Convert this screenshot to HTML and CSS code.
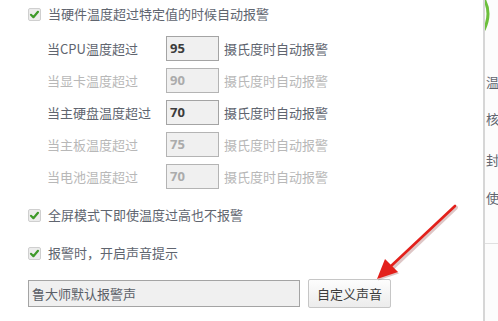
FILE: index.html
```html
<!DOCTYPE html>
<html lang="zh-CN">
<head>
<meta charset="utf-8">
<title>温度报警设置</title>
<link rel="stylesheet" href="styles.css">
</head>
<body>
<div class="window">
  <div class="main">
    <div class="check-row first">
      <span class="cb"><svg viewBox="0 0 13 13" width="13" height="13"><path d="M3 6.8 L5.4 9.2 L10 3.8" fill="none" stroke="#3f9a2a" stroke-width="2.2" stroke-linecap="round" stroke-linejoin="round"/></svg></span>
      <span class="ctext">当硬件温度超过特定值的时候自动报警</span>
    </div>
    <div class="temps">
      <div class="trow">
        <span class="tlabel">当CPU温度超过</span><span class="tbox">95</span><span class="unit">摄氏度时自动报警</span>
      </div>
      <div class="trow off">
        <span class="tlabel">当显卡温度超过</span><span class="tbox">90</span><span class="unit">摄氏度时自动报警</span>
      </div>
      <div class="trow">
        <span class="tlabel">当主硬盘温度超过</span><span class="tbox">70</span><span class="unit">摄氏度时自动报警</span>
      </div>
      <div class="trow off">
        <span class="tlabel">当主板温度超过</span><span class="tbox">75</span><span class="unit">摄氏度时自动报警</span>
      </div>
      <div class="trow off">
        <span class="tlabel">当电池温度超过</span><span class="tbox">70</span><span class="unit">摄氏度时自动报警</span>
      </div>
    </div>
    <div class="check-row fullscreen">
      <span class="cb"><svg viewBox="0 0 13 13" width="13" height="13"><path d="M3 6.8 L5.4 9.2 L10 3.8" fill="none" stroke="#3f9a2a" stroke-width="2.2" stroke-linecap="round" stroke-linejoin="round"/></svg></span>
      <span class="ctext">全屏模式下即使温度过高也不报警</span>
    </div>
    <div class="check-row sound">
      <span class="cb"><svg viewBox="0 0 13 13" width="13" height="13"><path d="M3 6.8 L5.4 9.2 L10 3.8" fill="none" stroke="#3f9a2a" stroke-width="2.2" stroke-linecap="round" stroke-linejoin="round"/></svg></span>
      <span class="ctext">报警时，开启声音提示</span>
    </div>
    <div class="sound-row">
      <div class="field">鲁大师默认报警声</div>
      <div class="btn">自定义声音</div>
    </div>
  </div>
  <div class="side">
    <svg class="arc" viewBox="0 0 12 32" width="12" height="32"><path d="M1 0 Q9 14 1 31" fill="none" stroke="#6cbf3c" stroke-width="3"/></svg>
    <span class="sch s1">温</span>
    <span class="sch s2">核</span>
    <span class="sch s3">封</span>
    <span class="sch s4">使</span>
    <div class="hline"></div>
  </div>
  <svg class="arrow" viewBox="0 0 498 321" width="498" height="321">
    <line x1="455" y1="206" x2="392" y2="266" stroke="#7a1a1a" stroke-opacity="0.25" stroke-width="4" stroke-linecap="round" transform="translate(1,1.5)"/>
    <line x1="455" y1="206" x2="390" y2="267" stroke="#e3201b" stroke-width="2.6" stroke-linecap="round"/>
    <polygon points="377,279 385,259 398,272" fill="#7a1a1a" fill-opacity="0.25" transform="translate(1,1.5)"/>
    <polygon points="377,279 385,259 398,272" fill="#e3201b"/>
  </svg>
</div>
</body>
</html>
```
FILE: styles.css
```css
* { box-sizing: border-box; }
html, body { margin: 0; padding: 0; }
body {
  width: 498px;
  height: 321px;
  overflow: hidden;
  background: #ffffff;
  font-family: "Noto Sans CJK SC", "Noto Sans", sans-serif;
  font-size: 13px;
  color: #60656f;
}
.window {
  position: relative;
  display: flex;
  width: 498px;
  height: 321px;
}
.main {
  width: 483px;
  flex: none;
  display: flex;
  flex-direction: column;
  padding-left: 28px;
  background: #ffffff;
}
.check-row {
  display: flex;
  align-items: center;
  height: 20px;
}
.check-row.first { margin-top: 4px; }
.check-row.fullscreen { margin-top: 16px; }
.check-row.sound { margin-top: 18px; }
.cb {
  width: 13px;
  height: 13px;
  flex: none;
  display: flex;
  border: 1px solid #cfcfcf;
  border-radius: 2px;
  background: #ececec;
  margin-right: 7px;
}
.cb svg { display: block; margin: -1px; }
.ctext { line-height: 20px; white-space: nowrap; }
.temps {
  display: flex;
  flex-direction: column;
  gap: 7px;
  margin-top: 12px;
  margin-left: 19px;
}
.trow {
  display: flex;
  align-items: center;
  height: 25px;
}
.tlabel { width: 119px; flex: none; white-space: nowrap; }
.tbox {
  width: 53px;
  height: 25px;
  flex: none;
  border: 1px solid #a4a4a4;
  background: #f0f0f0;
  font-family: "Open Sans", "Liberation Sans", sans-serif;
  font-weight: 700;
  font-size: 13px;
  color: #3c3c3c;
  line-height: 23px;
  padding-left: 3px;
}
.unit { margin-left: 5px; white-space: nowrap; }
.trow.off { color: #b8b8b8; }
.trow.off .tbox { color: #ababab; border-color: #b4b4b4; }
.sound-row {
  display: flex;
  align-items: center;
  margin-top: 16px;
  height: 29px;
}
.field {
  width: 272px;
  height: 27px;
  border: 1px solid #a4a4a4;
  background: #f0f0f0;
  color: #5a5f68;
  line-height: 25px;
  padding-left: 3px;
}
.btn {
  margin-left: 8px;
  width: 83px;
  height: 29px;
  border: 1px solid #c6c6c6;
  border-radius: 2px;
  background: linear-gradient(#fdfdfd, #ececec);
  color: #3c3c3c;
  text-align: center;
  line-height: 27px;
}
.side {
  position: relative;
  flex: 1;
  border-left: 2px solid #d6d6d6;
  background: #fcfcfc;
  display: flex;
  flex-direction: column;
  padding-top: 74px;
  color: #60656f;
  overflow: hidden;
}
.arc { position: absolute; left: -2px; top: -1px; }
.sch { display: block; line-height: 16px; padding-left: 1px; white-space: nowrap; }
.s2 { margin-top: 21px; }
.s3 { margin-top: 25px; }
.s4 { margin-top: 22px; }
.hline {
  margin-top: 37px;
  height: 1px;
  background: #e0e0e0;
}
.arrow { position: absolute; left: 0; top: 0; pointer-events: none; }
```
